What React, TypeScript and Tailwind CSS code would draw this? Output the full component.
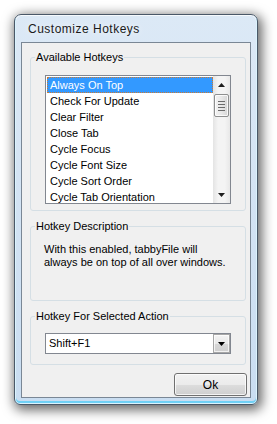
import React from "react";

const items = [
  "Always On Top",
  "Check For Update",
  "Clear Filter",
  "Close Tab",
  "Cycle Focus",
  "Cycle Font Size",
  "Cycle Sort Order",
  "Cycle Tab Orientation",
];

const font = { fontFamily: '"Liberation Sans", Arial, sans-serif' };

function Group({ label, children, className }: { label: string; children: React.ReactNode; className?: string }) {
  return (
    <fieldset className={"border border-[#d5dfe5] rounded-[3px] " + (className ?? "")}>
      <legend className="ml-[4px] px-[1px] text-[11px] leading-[14px] text-black">{label}</legend>
      {children}
    </fieldset>
  );
}

export default function App() {
  return (
    <div className="w-[277px] h-[424px] bg-white pl-[14px] pt-[14px]" style={font}>
      <div className="w-[244px] h-[391px] rounded-t-[7px] rounded-b-[6px] border border-[#4a5868] bg-[linear-gradient(to_bottom,#dce9f6,#c9ddf1)] shadow-[2px_3px_12px_2px_rgba(0,0,0,0.6),inset_0_0_0_1px_rgba(255,255,255,0.75),inset_0_-2px_0_1px_#6fd0f5] flex flex-col px-[6px] pb-[6px]">
        <div className="h-[27px] flex items-center pl-[7px] pt-[1px] text-[12px] tracking-[0.5px] text-[#1a1a1a]" style={{ textShadow: "0 0 6px rgba(255,255,255,0.9)" }}>
          Customize Hotkeys
        </div>
        <div className="flex-1 border border-[#7a8795] bg-[#f0f0f0] flex flex-col pl-[8px] pr-[4px] pt-[7px]">
          <Group label="Available Hotkeys" className="h-[161px]">
            <div className="pt-[11px] px-[14px]">
              <div className="h-[129px] border border-[#828790] bg-white flex">
                <div className="flex-1 pl-[1px] pt-[1px] overflow-hidden">
                  {items.map((it, i) => (
                    <div
                      key={it}
                      className={
                        "h-[16px] leading-[16px] pl-[3px] text-[11px] whitespace-nowrap " +
                        (i === 0 ? "bg-[#3399ff] text-white outline-1 outline-dotted outline-[#cc7a33] -outline-offset-1" : "text-black")
                      }
                    >
                      {it}
                    </div>
                  ))}
                </div>
                <div className="w-[17px] bg-[linear-gradient(to_right,#e4e4e4,#f4f4f4_30%,#f4f4f4_70%,#e8e8e8)] flex flex-col items-center">
                  <div className="h-[17px] w-full flex items-center justify-center">
                    <svg width="7" height="4" viewBox="0 0 7 4"><path d="M3.5 0 L7 4 L0 4 Z" fill="#1e1e1e" /></svg>
                  </div>
                  <div className="mt-[1px] w-[15px] h-[23px] rounded-[2px] border border-[#8e8f8f] bg-[linear-gradient(to_right,#f3f3f3,#e8e8e8_50%,#d6d6d6)] flex flex-col items-center justify-center gap-[2px] shadow-[inset_0_0_0_1px_rgba(255,255,255,0.8)]">
                    {[0, 1, 2, 3].map((k) => (
                      <div key={k} className="w-[7px] h-[1px] bg-[#6b6b6b]" />
                    ))}
                  </div>
                  <div className="flex-1" />
                  <div className="h-[17px] w-full flex items-center justify-center">
                    <svg width="7" height="4" viewBox="0 0 7 4"><path d="M0 0 L7 0 L3.5 4 Z" fill="#1e1e1e" /></svg>
                  </div>
                </div>
              </div>
            </div>
          </Group>

          <Group label="Hotkey Description" className="mt-[8px] h-[82px]">
            <div className="pt-[10px] pl-[13px] pr-[8px] text-[11px] leading-[13px] text-black">
              With this enabled, tabbyFile will
              <br />
              always be on top of all over windows.
            </div>
          </Group>

          <Group label="Hotkey For Selected Action" className="mt-[8px] h-[56px]">
            <div className="pt-[10px] px-[14px]">
              <div className="h-[21px] border border-[#828790] bg-white flex items-center">
                <div className="flex-1 pl-[3px] text-[11px] text-black leading-[19px]">Shift+F1</div>
                <div className="w-[17px] h-[19px] border border-[#a7a7a7] bg-[linear-gradient(to_bottom,#f4f4f4,#e9e9e9_50%,#d8d8d8_51%,#cfcfcf)] flex items-center justify-center shadow-[inset_0_0_0_1px_rgba(255,255,255,0.7)]">
                  <svg width="7" height="4" viewBox="0 0 7 4"><path d="M0 0 L7 0 L3.5 4 Z" fill="#000" /></svg>
                </div>
              </div>
            </div>
          </Group>

          <div className="mt-[8px] flex justify-end">
            <button className="w-[73px] h-[23px] rounded-[3px] border border-[#707070] bg-[linear-gradient(to_bottom,#f2f2f2,#ebebeb_50%,#dddddd_51%,#cfcfcf)] shadow-[inset_0_0_0_1px_rgba(255,255,255,0.75)] text-[12px] text-black mr-[-1px]">
              Ok
            </button>
          </div>
        </div>
      </div>
    </div>
  );
}
